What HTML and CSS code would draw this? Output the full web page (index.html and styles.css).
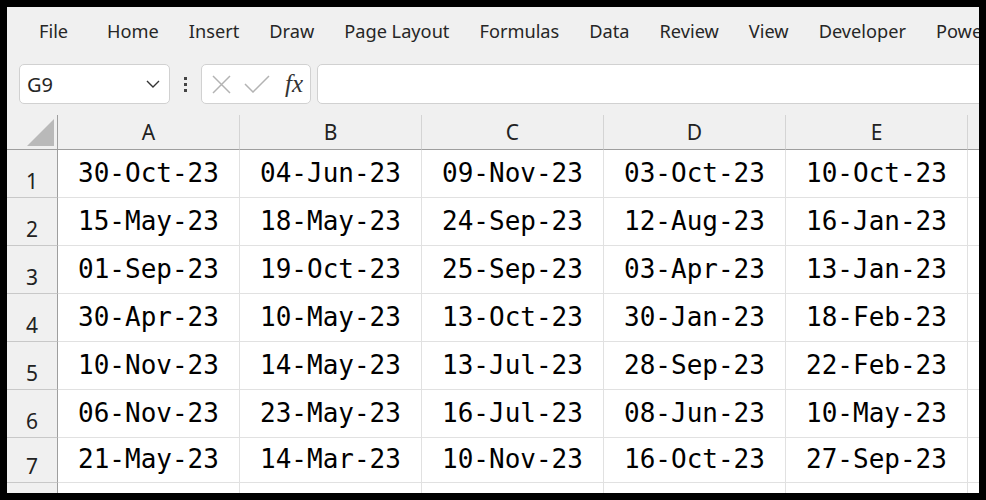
FILE: index.html
```html
<!DOCTYPE html>
<html lang="en">
<head>
    <meta charset="UTF-8">
    <title>Dates - Excel</title>
    <link rel="stylesheet" href="styles.css">
</head>
<body>
    <div class="frame">
        <div class="tabs">
            <span class="tab tab-file">File</span>
            <span class="tab">Home</span>
            <span class="tab">Insert</span>
            <span class="tab">Draw</span>
            <span class="tab">Page Layout</span>
            <span class="tab">Formulas</span>
            <span class="tab">Data</span>
            <span class="tab">Review</span>
            <span class="tab">View</span>
            <span class="tab">Developer</span>
            <span class="tab">Power Pivot</span>
        </div>

        <div class="formula-bar">
            <div class="name-box">
                <span>G9</span>
                <svg class="chevron" width="14" height="8" viewBox="0 0 14 8">
                    <path d="M1 1 L7 7 L13 1" fill="none" stroke="#333" stroke-width="1.4"/>
                </svg>
            </div>
            <div class="grip">
                <i></i><i></i><i></i>
            </div>
            <div class="fx-box">
                <svg width="19" height="19" viewBox="0 0 19 19">
                    <path d="M1 1 L18 18 M18 1 L1 18" stroke="#b3b3b3" stroke-width="1.5"/>
                </svg>
                <svg width="26" height="18" viewBox="0 0 26 18">
                    <path d="M1 9 L9 17 L25 1" fill="none" stroke="#b3b3b3" stroke-width="1.5"/>
                </svg>
                <span class="fx">fx</span>
            </div>
            <div class="formula-input"></div>
        </div>

        <div class="sheet">
            <div class="corner">
                <svg width="27" height="27" viewBox="0 0 27 27">
                    <path d="M0 27 L27 27 L27 0 Z" fill="#b9b9b9"/>
                </svg>
            </div>
            <div class="col-head">A</div>
            <div class="col-head">B</div>
            <div class="col-head">C</div>
            <div class="col-head">D</div>
            <div class="col-head">E</div>
            <div class="col-head">F</div>

            <div class="row-head">1</div>
            <div class="cell">30-Oct-23</div><div class="cell">04-Jun-23</div><div class="cell">09-Nov-23</div><div class="cell">03-Oct-23</div><div class="cell">10-Oct-23</div><div class="cell"></div>

            <div class="row-head">2</div>
            <div class="cell">15-May-23</div><div class="cell">18-May-23</div><div class="cell">24-Sep-23</div><div class="cell">12-Aug-23</div><div class="cell">16-Jan-23</div><div class="cell"></div>

            <div class="row-head">3</div>
            <div class="cell">01-Sep-23</div><div class="cell">19-Oct-23</div><div class="cell">25-Sep-23</div><div class="cell">03-Apr-23</div><div class="cell">13-Jan-23</div><div class="cell"></div>

            <div class="row-head">4</div>
            <div class="cell">30-Apr-23</div><div class="cell">10-May-23</div><div class="cell">13-Oct-23</div><div class="cell">30-Jan-23</div><div class="cell">18-Feb-23</div><div class="cell"></div>

            <div class="row-head">5</div>
            <div class="cell">10-Nov-23</div><div class="cell">14-May-23</div><div class="cell">13-Jul-23</div><div class="cell">28-Sep-23</div><div class="cell">22-Feb-23</div><div class="cell"></div>

            <div class="row-head">6</div>
            <div class="cell">06-Nov-23</div><div class="cell">23-May-23</div><div class="cell">16-Jul-23</div><div class="cell">08-Jun-23</div><div class="cell">10-May-23</div><div class="cell"></div>

            <div class="row-head">7</div>
            <div class="cell">21-May-23</div><div class="cell">14-Mar-23</div><div class="cell">10-Nov-23</div><div class="cell">16-Oct-23</div><div class="cell">27-Sep-23</div><div class="cell"></div>

            <div class="row-head">8</div>
            <div class="cell"></div><div class="cell"></div><div class="cell"></div><div class="cell"></div><div class="cell"></div><div class="cell"></div>
        </div>
    </div>
</body>
</html>
```

FILE: styles.css
```css
:root {
    --ribbon: #f0f0f0;
    --text: #262626;
    --box-border: #d1d1d1;
    --grid: #e1e1e1;
    --head-line: #9e9e9e;
}

body {
    margin: 0;
    padding: 7px 0 0 7px;
    background: #000;
    height: 500px;
    box-sizing: border-box;
    overflow: hidden;
}

.frame {
    width: 972px;
    height: 486px;
    background: var(--ribbon);
    overflow: hidden;
    font-family: 'Noto Sans', 'Open Sans', sans-serif;
    color: var(--text);
}

/* ribbon tabs */
.tabs {
    height: 47px;
    display: flex;
    align-items: center;
    gap: 30px;
    padding-left: 32px;
    font-size: 18.2px;
    white-space: nowrap;
}

.tab-file {
    margin-right: 9px;
}

/* formula bar */
.formula-bar {
    margin-top: 10px;
    height: 40px;
    display: flex;
    align-items: stretch;
    padding-left: 12px;
}

.formula-bar > div {
    flex-shrink: 0;
}

.name-box {
    width: 151px;
    box-sizing: border-box;
    background: #fff;
    border: 1px solid var(--box-border);
    border-radius: 5px;
    display: flex;
    align-items: center;
    justify-content: space-between;
    padding: 0 9px 0 7px;
    font-size: 20px;
}

.grip {
    width: 31px;
    display: flex;
    flex-direction: column;
    align-items: center;
    justify-content: center;
    gap: 3px;
}

.grip i {
    width: 3px;
    height: 3px;
    background: #444;
}

.fx-box {
    width: 110px;
    box-sizing: border-box;
    background: #fff;
    border: 1px solid var(--box-border);
    border-radius: 5px;
    display: flex;
    align-items: center;
    padding-left: 10px;
    gap: 13px;
}

.fx {
    font-family: 'Liberation Serif', serif;
    font-style: italic;
    font-size: 25px;
    color: #333;
    margin-left: 2px;
}

.formula-input {
    margin-left: 6px;
    width: 700px;
    background: #fff;
    border: 1px solid var(--box-border);
    border-radius: 5px 0 0 5px;
}

/* grid */
.sheet {
    margin-top: 11px;
    display: grid;
    grid-template-columns: 51px repeat(6, 182px);
    grid-template-rows: 35px repeat(6, 48px) 45px 48px;
    background: #fff;
}

.sheet > div {
    box-sizing: border-box;
    border-right: 1px solid var(--grid);
    border-bottom: 1px solid var(--grid);
}

.corner {
    background: var(--ribbon);
    display: flex;
    align-items: flex-end;
    justify-content: flex-end;
    padding: 0 3px 3px 0;
    border-right-color: var(--head-line) !important;
    border-bottom-color: var(--head-line) !important;
}

.col-head {
    background: var(--ribbon);
    border-right-color: #d4d4d4 !important;
    border-bottom-color: var(--head-line) !important;
    display: flex;
    align-items: center;
    justify-content: center;
    font-size: 21px;
    color: #222;
}

.row-head {
    background: var(--ribbon);
    border-right-color: var(--head-line) !important;
    border-bottom-color: #c8c8c8 !important;
    display: flex;
    align-items: flex-end;
    justify-content: center;
    padding-bottom: 2px;
    font-size: 21px;
    color: #222;
}

.cell {
    display: flex;
    align-items: center;
    justify-content: center;
    padding-bottom: 2px;
    font-family: 'DejaVu Sans Mono', 'Liberation Mono', monospace;
    font-size: 26px;
    color: #000;
}
```
